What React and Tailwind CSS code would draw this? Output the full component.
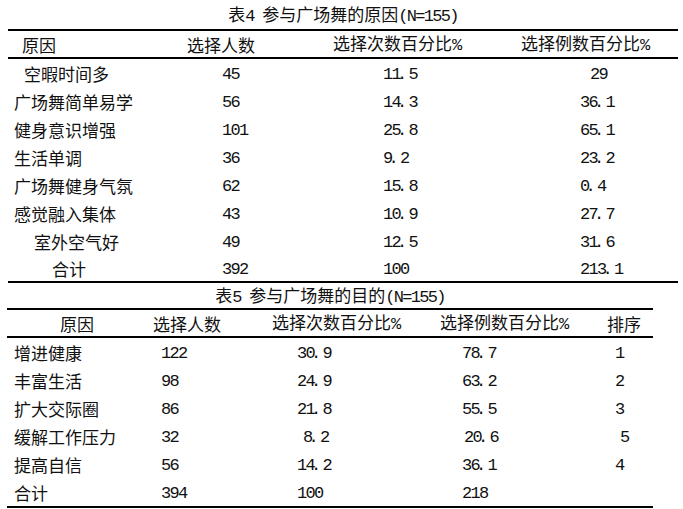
function Num({ s }) {
  // song-style digits: the dot hugs the digit before it
  const out = [];
  for (let i = 0; i < s.length; i++) {
    const c = s[i];
    const next = s[i + 1];
    if (next === ".") {
      out.push(<span key={i} className="tracking-[-4.7px]">{c}</span>);
    } else if (c === ".") {
      out.push(<span key={i} className="tracking-[1.3px]">{c}</span>);
    } else {
      out.push(<span key={i}>{c}</span>);
    }
  }
  return <span className="font-['Liberation_Mono',monospace] tracking-[-1.7px] whitespace-pre">{out}</span>;
}

function T({ s }) {
  const parts = s.split(/([\x20-\x7e]+)/).filter(Boolean);
  return (
    <span className="whitespace-pre">
      {parts.map((p, i) =>
        /^[\x20-\x7e]+$/.test(p) ? <Num key={i} s={p} /> : <span key={i}>{p}</span>
      )}
    </span>
  );
}

const cols4 = "grid grid-cols-[172px_150px_185px_163px]";
const cols5 = "grid grid-cols-[143px_118px_168px_164px_53px]";

const head4 = [
  ["原因", "pl-[14px]"],
  ["选择人数", "pl-[7px]"],
  ["选择次数百分比%", "pl-[3px]"],
  ["选择例数百分比%", "pl-[6px]"],
];

const rows4 = [
  [["空暇时间多", "pl-[16px]"], ["45", "pl-[42px]"], ["11.5", "pl-[53px]"], ["29", "pl-[75px]"]],
  [["广场舞简单易学", "pl-[6px]"], ["56", "pl-[42px]"], ["14.3", "pl-[53px]"], ["36.1", "pl-[65px]"]],
  [["健身意识增强", "pl-[6px]"], ["101", "pl-[42px]"], ["25.8", "pl-[53px]"], ["65.1", "pl-[65px]"]],
  [["生活单调", "pl-[6px]"], ["36", "pl-[42px]"], ["9.2", "pl-[53px]"], ["23.2", "pl-[65px]"]],
  [["广场舞健身气氛", "pl-[6px]"], ["62", "pl-[42px]"], ["15.8", "pl-[53px]"], ["0.4", "pl-[65px]"]],
  [["感觉融入集体", "pl-[6px]"], ["43", "pl-[42px]"], ["10.9", "pl-[53px]"], ["27.7", "pl-[65px]"]],
  [["室外空气好", "pl-[26px]"], ["49", "pl-[42px]"], ["12.5", "pl-[53px]"], ["31.6", "pl-[65px]"]],
  [["合计", "pl-[44px]"], ["392", "pl-[42px]"], ["100", "pl-[53px]"], ["213.1", "pl-[65px]"]],
];

const head5 = [
  ["原因", "pl-[53px]"],
  ["选择人数", "pl-[3px]"],
  ["选择次数百分比%", "pl-[4px]"],
  ["选择例数百分比%", "pl-[4px]"],
  ["排序", "pl-[7px]"],
];

const rows5 = [
  [["增进健康", "pl-[7px]"], ["122", "pl-[11px]"], ["30.9", "pl-[29px]"], ["78.7", "pl-[26px]"], ["1", "pl-[15px]"]],
  [["丰富生活", "pl-[7px]"], ["98", "pl-[11px]"], ["24.9", "pl-[29px]"], ["63.2", "pl-[26px]"], ["2", "pl-[15px]"]],
  [["扩大交际圈", "pl-[7px]"], ["86", "pl-[11px]"], ["21.8", "pl-[29px]"], ["55.5", "pl-[26px]"], ["3", "pl-[15px]"]],
  [["缓解工作压力", "pl-[7px]"], ["32", "pl-[11px]"], ["8.2", "pl-[35px]"], ["20.6", "pl-[28px]"], ["5", "pl-[20px]"]],
  [["提高自信", "pl-[7px]"], ["56", "pl-[11px]"], ["14.2", "pl-[29px]"], ["36.1", "pl-[26px]"], ["4", "pl-[15px]"]],
  [["合计", "pl-[7px]"], ["394", "pl-[11px]"], ["100", "pl-[29px]"], ["218", "pl-[26px]"], ["", "pl-[15px]"]],
];

function Row({ cells, cols, className }) {
  return (
    <div className={`${cols} ${className}`}>
      {cells.map(([text, pad], i) => (
        <div key={i} className={`flex items-center whitespace-nowrap ${pad}`}>
          <T s={text} />
        </div>
      ))}
    </div>
  );
}

export default function App() {
  return (
    <div className="w-[683px] h-[509px] bg-white text-[#111] text-[17px] leading-none font-['Noto_Sans_CJK_SC',sans-serif] overflow-hidden">
      <div className="ml-[8px] w-[670px]">
        <div className="h-[29px] flex items-center justify-center">
          <T s="表4 参与广场舞的原因(N=155)" />
        </div>
        <Row cells={head4} cols={cols4} className="h-[26px] border-t-2 border-b-2 border-black box-content" />
        {rows4.map((r, i) => (
          <Row
            key={i}
            cells={r}
            cols={cols4}
            className={i === rows4.length - 1 ? "h-[26px] border-b-2 border-black box-content" : "h-7"}
          />
        ))}
      </div>
      <div className="ml-[7px] w-[646px]">
        <div className="h-[25px] flex items-center justify-center">
          <T s="表5 参与广场舞的目的(N=155)" />
        </div>
        <Row cells={head5} cols={cols5} className="h-[26px] border-t-2 border-b-2 border-black box-content" />
        {rows5.map((r, i) => (
          <Row
            key={i}
            cells={r}
            cols={cols5}
            className={i === rows5.length - 1 ? "h-7 border-b-2 border-black box-content" : "h-7"}
          />
        ))}
      </div>
    </div>
  );
}
